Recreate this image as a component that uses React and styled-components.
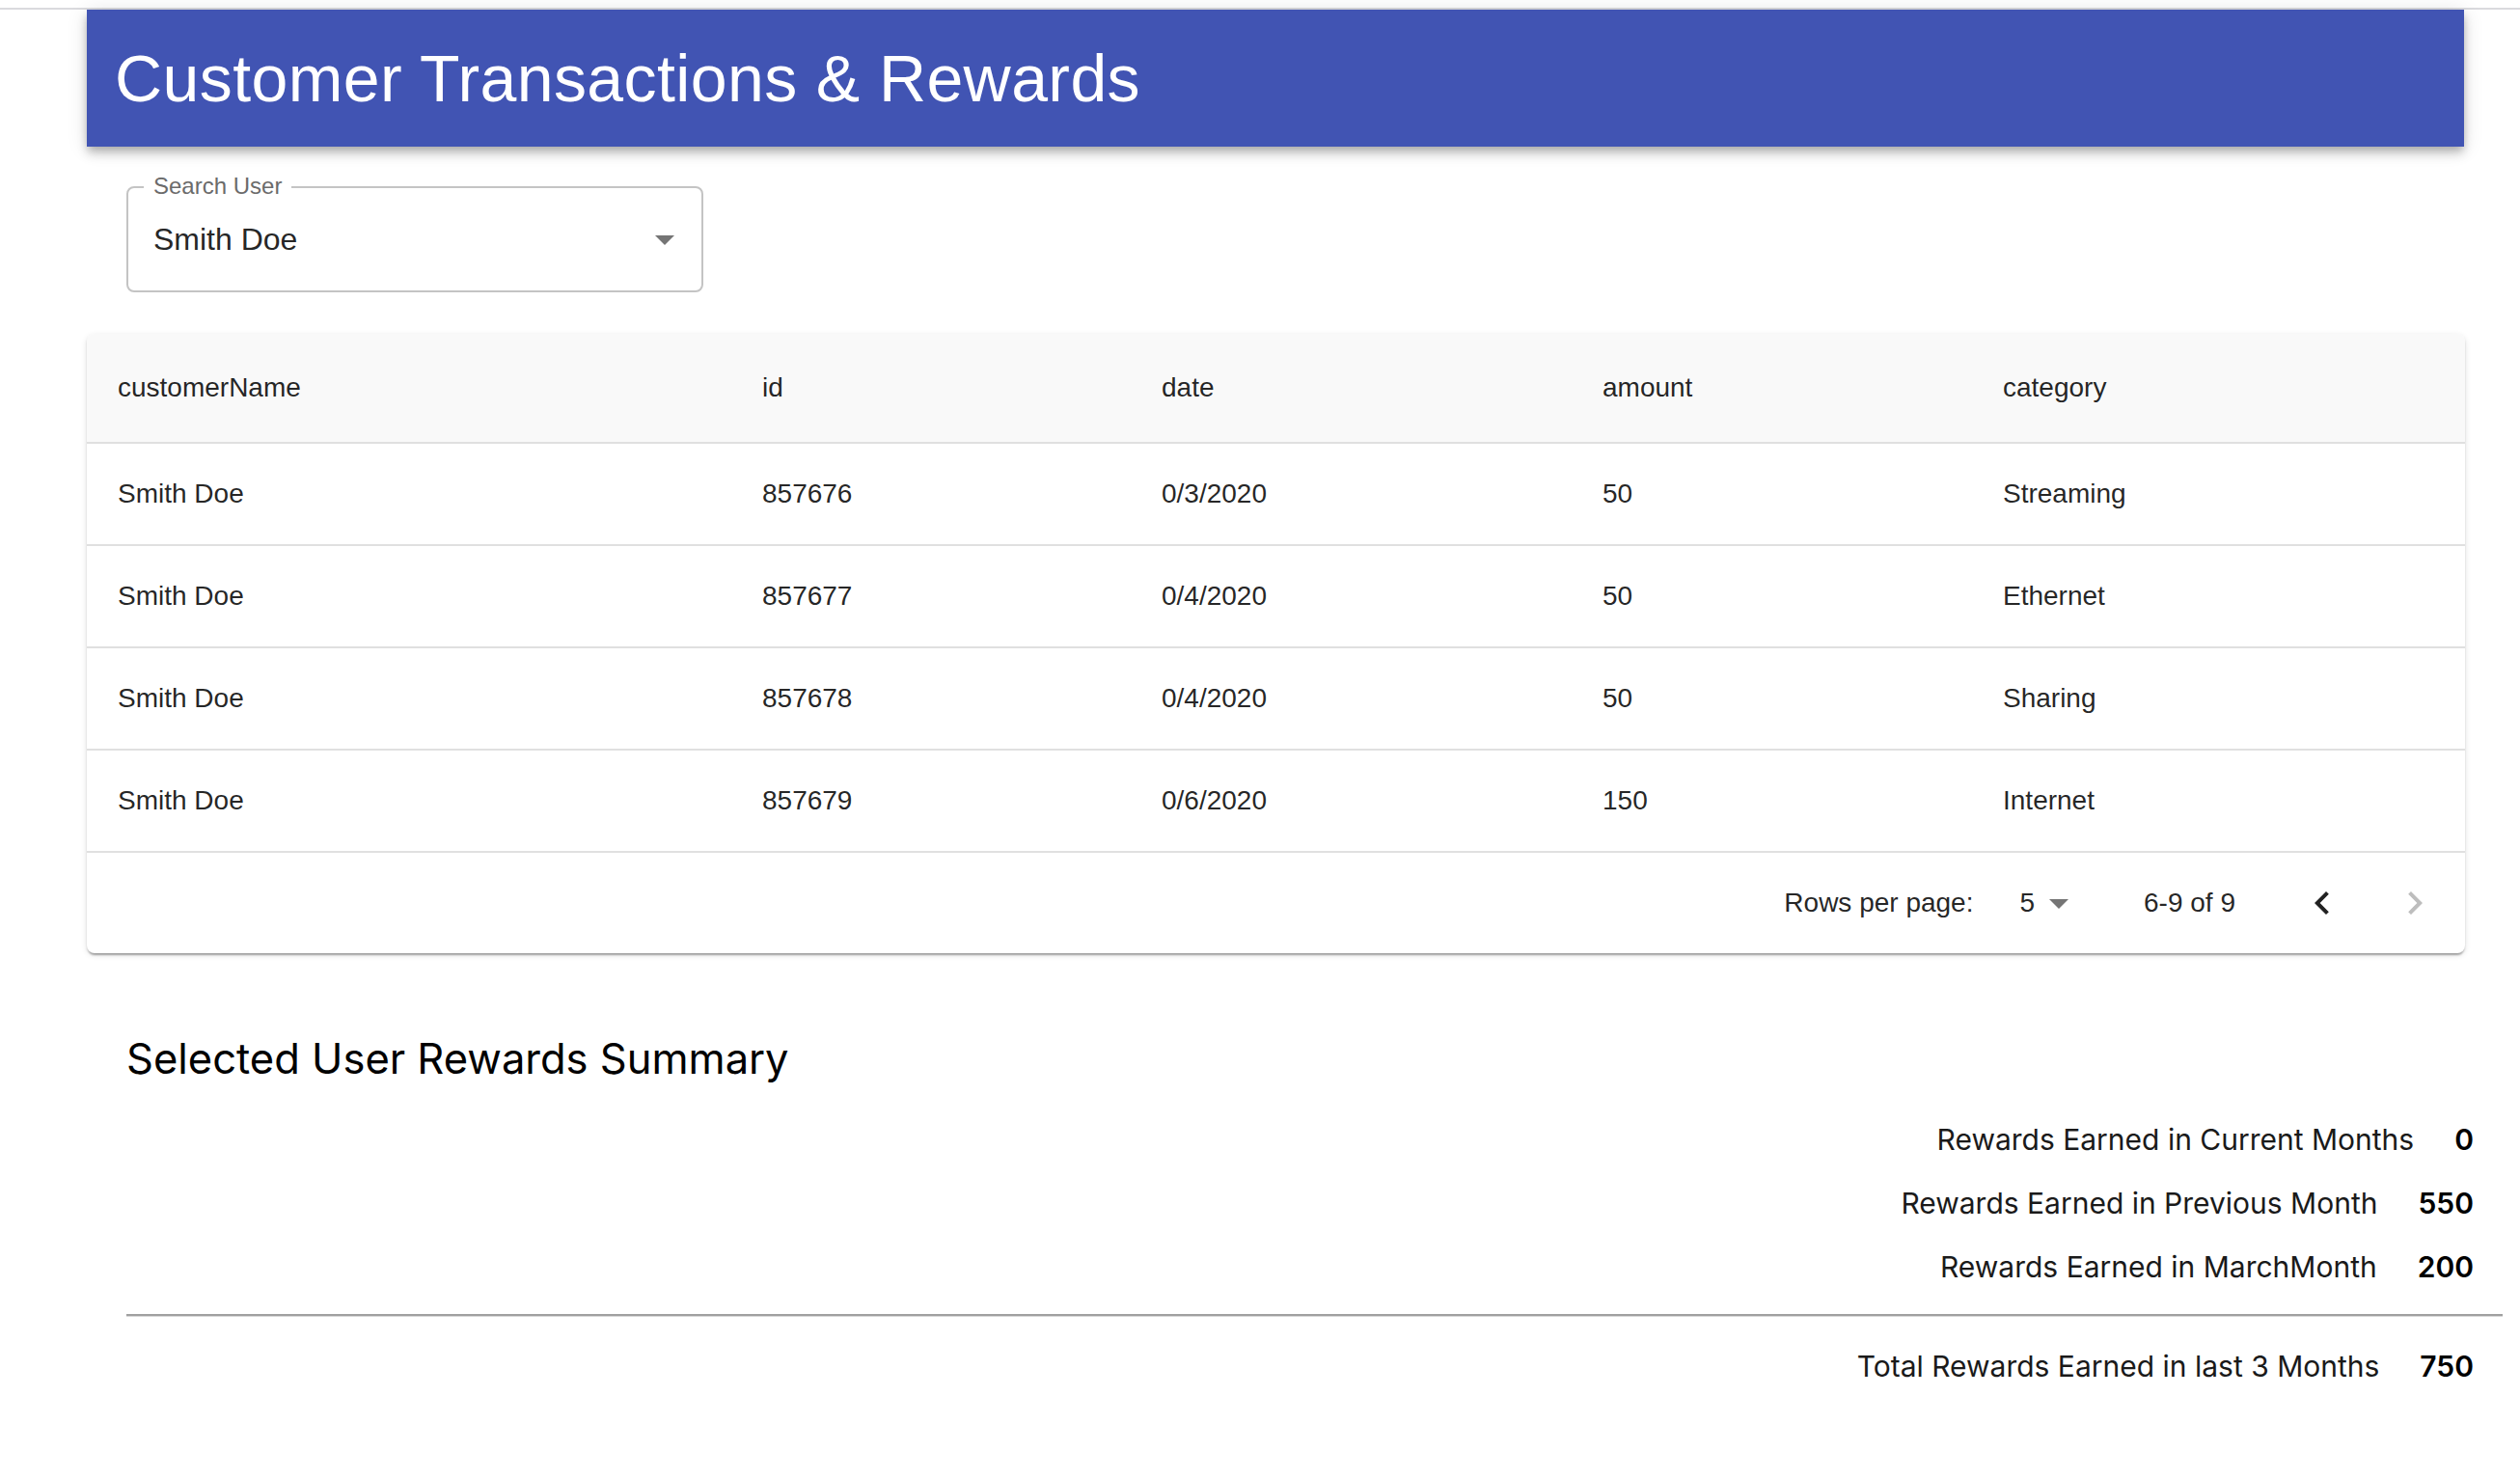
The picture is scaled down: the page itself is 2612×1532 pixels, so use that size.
import React from "react";
import styled, { createGlobalStyle } from "styled-components";

const transactions = [
  { customerName: "Smith Doe", id: 857676, date: "0/3/2020", amount: 50, category: "Streaming" },
  { customerName: "Smith Doe", id: 857677, date: "0/4/2020", amount: 50, category: "Ethernet" },
  { customerName: "Smith Doe", id: 857678, date: "0/4/2020", amount: 50, category: "Sharing" },
  { customerName: "Smith Doe", id: 857679, date: "0/6/2020", amount: 150, category: "Internet" },
];

const columns = [
  { key: "customerName", width: 668 },
  { key: "id", width: 414 },
  { key: "date", width: 457 },
  { key: "amount", width: 415 },
  { key: "category", width: 511 },
];

const summary = [
  { label: "Rewards Earned in Current Months", value: 0 },
  { label: "Rewards Earned in Previous Month", value: 550 },
  { label: "Rewards Earned in MarchMonth", value: 200 },
];

export default function App() {
  return (
    <>
      <GlobalStyle />
      <Page>
        <Banner>
          <Title>Customer Transactions &amp; Rewards</Title>
        </Banner>

        <Field>
          <FieldLabel>Search User</FieldLabel>
          <FieldValue>Smith Doe</FieldValue>
          <DropIcon viewBox="0 0 24 24"><path d="M7 10l5 5 5-5z" /></DropIcon>
        </Field>

        <TableCard>
          <Table>
            <colgroup>
              {columns.map((c) => <col key={c.key} width={c.width} />)}
            </colgroup>
            <thead>
              <tr>
                {columns.map((c) => <HeadCell key={c.key}>{c.key}</HeadCell>)}
              </tr>
            </thead>
            <tbody>
              {transactions.map((t) => (
                <tr key={t.id}>
                  {columns.map((c) => <Cell key={c.key}>{t[c.key]}</Cell>)}
                </tr>
              ))}
            </tbody>
          </Table>

          <Pagination>
            <span>Rows per page:</span>
            <PageSize>
              5
              <SmallDrop viewBox="0 0 24 24"><path d="M7 10l5 5 5-5z" /></SmallDrop>
            </PageSize>
            <span>6-9 of 9</span>
            <Nav>
              <NavButton>
                <svg viewBox="0 0 24 24"><path d="M15.41 16.59L10.83 12l4.58-4.59L14 6l-6 6 6 6 1.41-1.41z" /></svg>
              </NavButton>
              <NavButton disabled>
                <svg viewBox="0 0 24 24"><path d="M8.59 16.59L13.17 12 8.59 7.41 10 6l6 6-6 6-1.41-1.41z" /></svg>
              </NavButton>
            </Nav>
          </Pagination>
        </TableCard>

        <Summary>
          <SummaryTitle>Selected User Rewards Summary</SummaryTitle>
          {summary.map((s) => (
            <SummaryRow key={s.label}>
              <span>{s.label}</span>
              <Value>{s.value}</Value>
            </SummaryRow>
          ))}
          <Divider />
          <SummaryRow>
            <span>Total Rewards Earned in last 3 Months</span>
            <Value>750</Value>
          </SummaryRow>
        </Summary>
      </Page>
    </>
  );
}

const GlobalStyle = createGlobalStyle`
  body {
    margin: 0;
    padding-top: 8px;
    background: #fff;
    font-family: "Liberation Sans", Arial, sans-serif;
  }
`;

const Page = styled.div`
  border-top: 2px solid #dadade;
  display: flex;
  flex-direction: column;
  min-height: 1522px;
`;

const Banner = styled.header`
  margin: 0 58px 0 90px;
  height: 142px;
  background: #4154b3;
  display: flex;
  align-items: center;
  padding: 0 29px;
  box-shadow: 0 4px 8px -2px rgba(0, 0, 0, 0.2), 0 8px 10px 0 rgba(0, 0, 0, 0.14), 0 2px 20px 0 rgba(0, 0, 0, 0.12);
`;

const Title = styled.h1`
  margin: 0;
  color: #fff;
  font-size: 68px;
  font-weight: 400;
  letter-spacing: 0.4px;
  line-height: 1;
`;

const Field = styled.div`
  position: relative;
  margin: 41px 0 0 131px;
  width: 598px;
  height: 110px;
  box-sizing: border-box;
  border: 2px solid #c4c4c4;
  border-radius: 8px;
  display: flex;
  align-items: center;
  justify-content: space-between;
  padding: 0 14px 0 26px;
`;

const FieldLabel = styled.span`
  position: absolute;
  top: -14px;
  left: 16px;
  padding: 0 10px;
  background: #fff;
  font-size: 24px;
  line-height: 24px;
  color: #6b6b6b;
`;

const FieldValue = styled.span`
  font-size: 32px;
  color: rgba(0, 0, 0, 0.87);
`;

const DropIcon = styled.svg`
  width: 48px;
  height: 48px;
  fill: rgba(0, 0, 0, 0.54);
`;

const TableCard = styled.section`
  margin: 43px 57px 0 90px;
  background: #fff;
  border-radius: 8px;
  overflow: hidden;
  box-shadow: 0 4px 2px -2px rgba(0, 0, 0, 0.2), 0 2px 2px 0 rgba(0, 0, 0, 0.14), 0 2px 6px 0 rgba(0, 0, 0, 0.12);
`;

const Table = styled.table`
  width: 100%;
  table-layout: fixed;
  border-collapse: collapse;
`;

const HeadCell = styled.th`
  background: #f9f9f9;
  text-align: left;
  font-weight: 400;
  font-size: 28px;
  line-height: 48px;
  padding: 32px;
  color: rgba(0, 0, 0, 0.87);
  border-bottom: 2px solid #e0e0e0;
`;

const Cell = styled.td`
  font-size: 28px;
  line-height: 40px;
  padding: 32px;
  color: rgba(0, 0, 0, 0.87);
  border-bottom: 2px solid #e0e0e0;
`;

const Pagination = styled.div`
  height: 104px;
  display: flex;
  align-items: center;
  justify-content: flex-end;
  padding-right: 4px;
  font-size: 28px;
  color: rgba(0, 0, 0, 0.87);
`;

const PageSize = styled.div`
  display: flex;
  align-items: center;
  gap: 1px;
  margin: 0 64px 0 48px;
`;

const SmallDrop = styled.svg`
  width: 48px;
  height: 48px;
  fill: rgba(0, 0, 0, 0.54);
`;

const Nav = styled.div`
  display: flex;
  margin-left: 42px;
`;

const NavButton = styled.div`
  width: 96px;
  height: 96px;
  display: flex;
  align-items: center;
  justify-content: center;
  svg {
    width: 48px;
    height: 48px;
    fill: ${(p) => (p.disabled ? "rgba(0, 0, 0, 0.26)" : "rgba(0, 0, 0, 0.87)")};
  }
`;

const Summary = styled.section`
  margin: 81px 18px 0 131px;
  font-family: Inter, "Liberation Sans", sans-serif;
  color: #1a1a1a;
`;

const SummaryTitle = styled.h2`
  margin: 0 0 23px;
  font-size: 43.5px;
  font-weight: 400;
  line-height: 56px;
  color: #000;
`;

const SummaryRow = styled.div`
  height: 66px;
  display: flex;
  align-items: center;
  justify-content: flex-end;
  gap: 42px;
  padding-right: 30px;
  font-size: 30px;
`;

const Value = styled.span`
  font-weight: 600;
  color: #000;
`;

const Divider = styled.hr`
  margin: 16px 0 18px;
  height: 0;
  border: none;
  border-top: 2px solid #a0a0a0;
  border-bottom: 1px solid #d8d8d8;
`;
